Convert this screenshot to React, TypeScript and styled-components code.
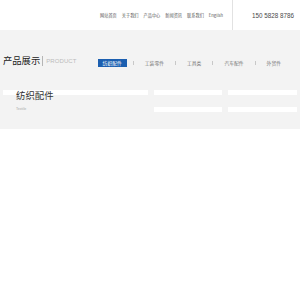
import styled, { createGlobalStyle } from "styled-components";

const GlobalStyle = createGlobalStyle`
   html, body {
      margin: 0;
      padding: 0;
      background: #fff;
      font-family: "Noto Sans CJK SC", "Liberation Sans", sans-serif;
   }
`;

const Page = styled.div`
   width: 300px;
   height: 300px;
   background: #fff;
   overflow: hidden;
`;

const TopBar = styled.header`
   height: 30px;
   display: flex;
   align-items: center;
   background: #fff;
`;

const Nav = styled.nav`
   display: flex;
   align-items: center;
   gap: 5px;
   margin-left: 100px;
`;

const NavLink = styled.a`
   font-size: 4.2px;
   line-height: 1;
   color: #555;
   text-decoration: none;
   white-space: nowrap;
`;

const VDivider = styled.div`
   width: 1px;
   height: 30px;
   background: #e2e2e2;
   margin-left: auto;
   margin-right: 19px;
`;

const Phone = styled.div`
   font-family: "Liberation Sans", sans-serif;
   font-size: 6.3px;
   color: #4a4a4a;
   letter-spacing: 0;
   margin-right: 6px;
   white-space: nowrap;
`;

const Section = styled.section`
   background: #f3f3f3;
   height: 99px;
   padding: 24px 3px 0;
   box-sizing: border-box;
`;

const TitleRow = styled.div`
   display: flex;
   align-items: center;
   height: 14px;
`;

const Title = styled.h2`
   margin: 0;
   font-size: 9.3px;
   font-weight: 400;
   color: #222;
   line-height: 1;
   white-space: nowrap;
`;

const TitleSep = styled.span`
   width: 1px;
   height: 10px;
   background: #b5b5b5;
   margin: 0 3px 0 2px;
`;

const SubTitle = styled.span`
   font-family: "Liberation Sans", sans-serif;
   font-size: 6px;
   color: #bbb;
   letter-spacing: 0.1px;
`;

const Tabs = styled.div`
   display: flex;
   align-items: center;
   margin-left: 21px;
   margin-top: 4px;
`;

const Tab = styled.span<{ $active?: boolean }>`
   font-size: 4.8px;
   line-height: 8px;
   height: 8px;
   padding: 0 5px;
   white-space: nowrap;
   color: ${(p) => (p.$active ? "#fff" : "#777")};
   background: ${(p) => (p.$active ? "#1c5fb0" : "transparent")};
`;

const TabSep = styled.span`
   width: 1px;
   height: 4px;
   background: #c8c8c8;
   margin: 0 6px;
`;

const Grid = styled.div`
   display: grid;
   grid-template-columns: 145px 68px 69px;
   column-gap: 6px;
   row-gap: 12px;
   margin-top: 22px;
`;

const Feature = styled.div`
   position: relative;
   grid-row: span 2;
`;

const Strip = styled.div`
   height: 5px;
   background: #fff;
`;

const Caption = styled.div`
   position: absolute;
   left: 13px;
   top: -1px;
`;

const CaptionTitle = styled.div`
   font-size: 9.4px;
   line-height: 12px;
   color: #333;
   white-space: nowrap;
`;

const CaptionSub = styled.div`
   font-family: "Liberation Sans", sans-serif;
   font-size: 3.6px;
   color: #aaa;
   margin-top: 6px;
`;

const navItems = ["网站首页", "关于我们", "产品中心", "新闻资讯", "联系我们", "English"];
const tabs = ["纺织配件", "工装零件", "工具类", "汽车配件", "外贸件"];

export default function App() {
   return (
      <Page>
         <GlobalStyle />
         <TopBar>
            <Nav>
               {navItems.map((n) => (
                  <NavLink key={n}>{n}</NavLink>
               ))}
            </Nav>
            <VDivider />
            <Phone>150 5828 8786</Phone>
         </TopBar>
         <Section>
            <TitleRow>
               <Title>产品展示</Title>
               <TitleSep />
               <SubTitle>PRODUCT</SubTitle>
               <Tabs>
                  {tabs.map((t, i) => (
                     <span key={t} style={{ display: "contents" }}>
                        {i > 0 && <TabSep />}
                        <Tab $active={i === 0}>{t}</Tab>
                     </span>
                  ))}
               </Tabs>
            </TitleRow>
            <Grid>
               <Feature>
                  <Strip />
                  <Caption>
                     <CaptionTitle>纺织配件</CaptionTitle>
                     <CaptionSub>Textile</CaptionSub>
                  </Caption>
               </Feature>
               <Strip />
               <Strip />
               <Strip />
               <Strip />
            </Grid>
         </Section>
      </Page>
   );
}
